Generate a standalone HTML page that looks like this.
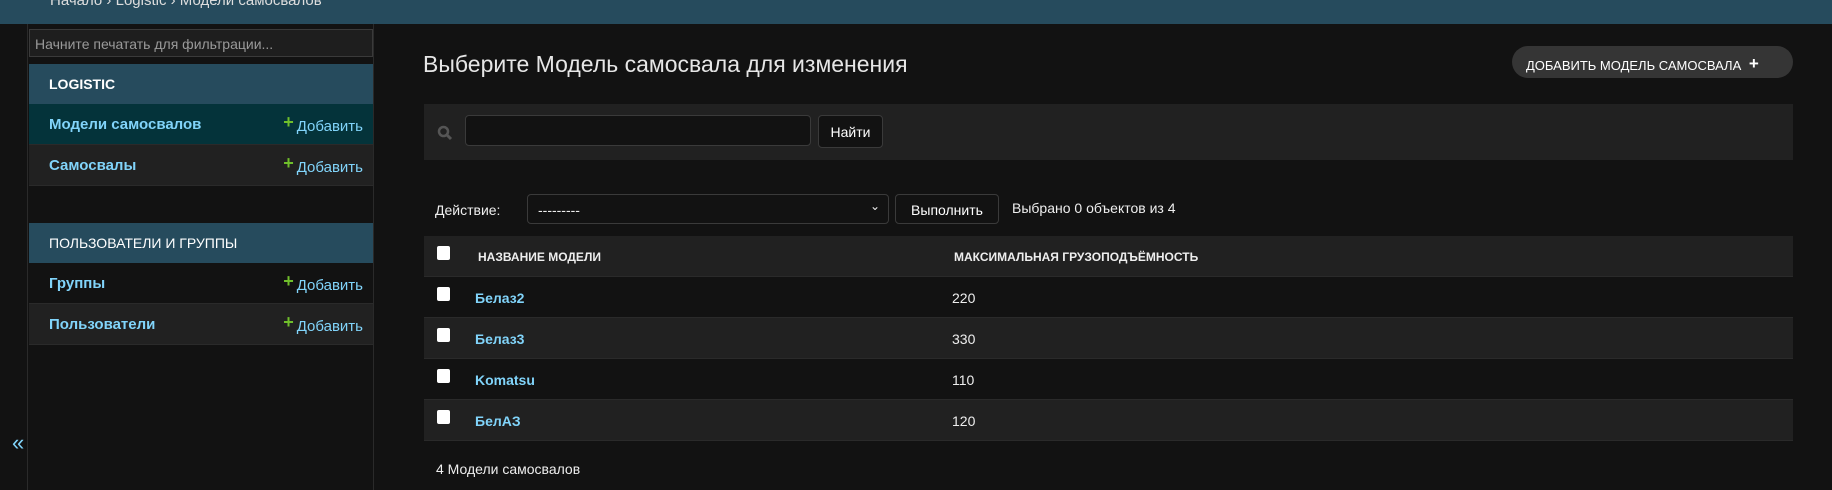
<!DOCTYPE html>
<html><head><meta charset="utf-8"><style>
*{margin:0;padding:0;box-sizing:border-box}
body{width:1832px;height:490px;background:#121212;font-family:"Liberation Sans",sans-serif;color:#eee;position:relative;overflow:hidden;font-size:14px}
.a{position:absolute}
.hdr{left:0;top:0;width:1832px;height:24px;background:#264b5d}
.crumb{left:50px;top:-8px;color:#ddd;font-size:15px}
.strip{left:0;top:24px;width:28px;height:466px;border-right:1px solid #2a2a2a}
.side{left:28px;top:24px;width:346px;height:466px;border-right:1px solid #2a2a2a}
.filter{left:29px;top:29px;width:344px;height:28px;border:1px solid #3a3a3a;background:#1e1e1e;color:#9a9a9a;font-size:14px;padding:6px 5px}
.cap{left:29px;width:344px;height:40px;background:#264b5d;color:#fff;font-size:14px;padding:12px 20px}
.row{left:29px;width:344px;height:41px;border-bottom:1px solid #2a2a2a}
.row .n{position:absolute;left:20px;top:12px;color:#81d4fa;font-weight:bold;font-size:15px}
.row .ad{position:absolute;right:10px;top:11px;color:#81d4fa;font-size:15px}
.row .ad b{color:#70bf2b;font-size:18px;margin-right:3px;position:relative;top:-3px}
.btn{border:1px solid #3a3a3a;background:#121212;border-radius:4px;color:#fff;font-size:14px;text-align:center}
.tr{left:424px;width:1369px;height:41px;border-bottom:1px solid #2a2a2a}
.tr .cb{position:absolute;left:13px;top:10px;width:13px;height:14px;background:#fff;border-radius:2px}
.tr .c1{position:absolute;left:51px;top:13px;color:#81d4fa;font-weight:bold;font-size:14px}
.tr .c2{position:absolute;left:528px;top:13px;color:#eee;font-size:14px}
</style></head><body>
<div class="a hdr"></div>
<div class="a crumb">Начало › Logistic › Модели самосвалов</div>
<div class="a strip"></div>
<div class="a" style="left:12px;top:430px;color:#81d4fa;font-size:22px">«</div>
<div class="a side"></div>
<div class="a filter">Начните печатать для фильтрации...</div>
<div class="a cap" style="top:64px;font-weight:bold">LOGISTIC</div>
<div class="a row" style="top:104px;background:#04333a"><span class="n">Модели самосвалов</span><span class="ad"><b>+</b>Добавить</span></div>
<div class="a row" style="top:145px;background:#212121"><span class="n">Самосвалы</span><span class="ad"><b>+</b>Добавить</span></div>
<div class="a cap" style="top:223px">ПОЛЬЗОВАТЕЛИ И ГРУППЫ</div>
<div class="a row" style="top:263px"><span class="n">Группы</span><span class="ad"><b>+</b>Добавить</span></div>
<div class="a row" style="top:304px;background:#212121"><span class="n">Пользователи</span><span class="ad"><b>+</b>Добавить</span></div>

<div class="a" style="left:423px;top:51px;font-size:23px;color:#e6e6e6">Выберите Модель самосвала для изменения</div>
<div class="a" style="left:1512px;top:46px;width:281px;height:32px;border-radius:16px;background:#353535;color:#fff;font-size:13px;padding:9px 0 0 14px">ДОБАВИТЬ МОДЕЛЬ САМОСВАЛА <b style="font-size:17px;position:relative;top:-1px;margin-left:4px">+</b></div>

<div class="a" style="left:424px;top:104px;width:1369px;height:56px;background:#212121"></div>
<svg class="a" style="left:437px;top:125px" width="16" height="16" viewBox="0 0 16 16"><circle cx="6.5" cy="6.5" r="4.5" stroke="#555" stroke-width="2.5" fill="none"/><path d="M10 10l4 4" stroke="#555" stroke-width="3"/></svg>
<div class="a" style="left:465px;top:115px;width:346px;height:31px;border:1px solid #3a3a3a;border-radius:4px;background:#121212"></div>
<div class="a btn" style="left:818px;top:115px;width:65px;height:33px;padding-top:8px">Найти</div>

<div class="a" style="left:435px;top:202px;font-size:14px">Действие:</div>
<div class="a" style="left:527px;top:194px;width:362px;height:30px;border:1px solid #3a3a3a;border-radius:4px;background:#121212;padding:7px 10px;font-size:14px">---------<span style="position:absolute;right:8px;top:4px;font-size:12px">&#8964;</span></div>
<div class="a btn" style="left:895px;top:194px;width:104px;height:30px;padding-top:7px">Выполнить</div>
<div class="a" style="left:1012px;top:200px;font-size:14px">Выбрано 0 объектов из 4</div>

<div class="a tr" style="top:236px;background:#212121"><span class="cb"></span><span class="c1" style="color:#eee;font-size:12px;top:14px;left:54px">НАЗВАНИЕ МОДЕЛИ</span><span class="c2" style="font-weight:bold;font-size:12px;top:14px;left:530px">МАКСИМАЛЬНАЯ ГРУЗОПОДЪЁМНОСТЬ</span></div>
<div class="a tr" style="top:277px"><span class="cb"></span><span class="c1">Белаз2</span><span class="c2">220</span></div>
<div class="a tr" style="top:318px;background:#212121"><span class="cb"></span><span class="c1">Белаз3</span><span class="c2">330</span></div>
<div class="a tr" style="top:359px"><span class="cb"></span><span class="c1">Komatsu</span><span class="c2">110</span></div>
<div class="a tr" style="top:400px;background:#212121"><span class="cb"></span><span class="c1">БелАЗ</span><span class="c2">120</span></div>
<div class="a" style="left:436px;top:461px;font-size:14px">4 Модели самосвалов</div>
</body></html>
